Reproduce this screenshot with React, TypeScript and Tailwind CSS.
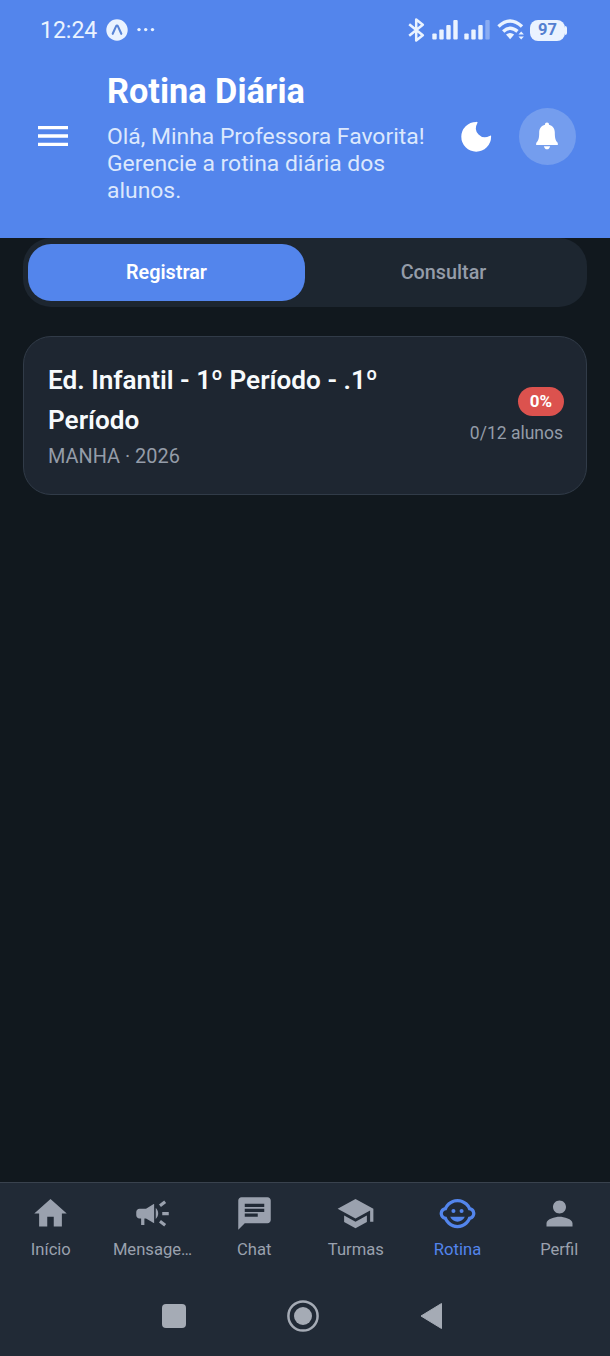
import type { ReactNode } from 'react';
import { MdChat, MdChildCare, MdHome, MdMenu, MdPerson, MdSchool } from 'react-icons/md';

function Signal({ faded = false }: { faded?: boolean }) {
  return (
    <svg width="26" height="20" viewBox="0 0 26 20" fill="#eaf3ff">
      <rect x="0.3" y="13.5" width="4.4" height="6" rx="1" />
      <rect x="7.3" y="9.5" width="4.4" height="10" rx="1" />
      <rect x="14.3" y="5" width="4.4" height="14.5" rx="1" />
      <rect x="21.3" y="0" width="4.4" height="19.5" rx="1" opacity={faded ? 0.35 : 1} />
    </svg>
  );
}

function StatusBar() {
  return (
    <div className="flex h-[60px] items-center text-[#eaf3ff]">
      <span className="ml-[40px] w-[58px] pt-px text-[23px] leading-[27px] whitespace-nowrap">12:24</span>
      <svg className="ml-[8px]" width="22" height="22" viewBox="0 0 22 22">
        <circle cx="11" cy="11" r="10.7" fill="#eaf3ff" />
        <path d="M6.7 14.8 L10 7.4 Q11 5.8 12 7.4 L15.3 14.8" fill="none" stroke="#5884d6" strokeWidth="2.1" strokeLinecap="round" />
      </svg>
      <svg className="ml-[8px]" width="20" height="6" viewBox="0 0 20 6" fill="#eaf3ff">
        <circle cx="3" cy="2.6" r="1.7" />
        <circle cx="9.7" cy="2.6" r="1.7" />
        <circle cx="16.5" cy="2.6" r="1.7" />
      </svg>
      <svg className="ml-[252px]" width="18" height="24" viewBox="0 0 18 24" fill="none" stroke="#eaf3ff" strokeWidth="2.5" strokeLinejoin="round">
        <path d="M1.2 6.2 L14.8 17.2 L8.2 22.4 V1.6 L14.8 6.8 L1.2 17.8" />
      </svg>
      <div className="ml-[6px] flex items-center gap-[6px]">
        <Signal />
        <Signal faded />
      </div>
      <svg className="ml-[7px]" width="28" height="22" viewBox="0 0 28 22" fill="none" stroke="#eaf3ff" strokeWidth="3.4">
        <path d="M1.5 7.5 Q13 -3.5 25 7.5" />
        <path d="M6.2 12.4 Q13 6 20.5 12.4" />
        <path d="M9 15.4 Q13 12.4 17.2 15.4 L13.1 20.2 Z" fill="#eaf3ff" stroke="none" />
        <path d="M21.5 15.6 L24.2 12.4 L26.9 15.6 Z M21.5 17.4 L24.2 20.6 L26.9 17.4 Z" fill="#eaf3ff" stroke="none" />
      </svg>
      <div className="ml-[5px] flex h-[21px] w-[35px] items-center justify-center rounded-[8px] bg-[#eaf3ff] text-[16.5px] leading-none font-bold text-[#5480d0]">
        97
      </div>
      <div className="h-[9px] w-[2px] rounded-r bg-[#eaf3ff]" />
    </div>
  );
}

function Header() {
  return (
    <header className="h-[238px] bg-[#5385ec]">
      <StatusBar />
      <div className="flex h-[152px] items-center">
        <MdMenu className="ml-[33px] h-[40px] w-[40px] text-white" />
        <div className="ml-[34px] w-[336px] pt-[2px]">
          <h1 className="text-[34.3px] leading-[40px] font-bold text-white">Rotina Diária</h1>
          <p className="mt-[12px] text-[22.9px] leading-[27px] text-[#dce8fd]">
            Olá, Minha Professora Favorita!
            <br />
            Gerencie a rotina diária dos
            <br />
            alunos.
          </p>
        </div>
        <svg className="ml-[18px]" width="31" height="31" viewBox="0 0 31 31" fill="#fff">
          <path d="M15.2 0.9 Q17.4 0.6 16.2 2.4 A9.1 9.1 0 0 0 28.6 14.9 Q30.4 13.7 30.1 15.8 A14.9 14.9 0 1 1 15.2 0.9 Z" />
        </svg>
        <div className="ml-[27px] flex h-[57px] w-[57px] items-center justify-center rounded-full bg-[#749dee]">
          <svg className="mr-px" width="24" height="28" viewBox="0 0 24 28" fill="#fff">
            <path d="M12 0.5 C13.3 0.5 14 1.4 14 2.7 C17.6 3.6 19.8 6.6 19.8 10.5 C19.8 16.5 20.6 18.5 22.5 20.4 Q23.6 23 22 23 H2 Q0.4 23 1.5 20.4 C3.4 18.5 4.2 16.5 4.2 10.5 C4.2 6.6 6.4 3.6 10 2.7 C10 1.4 10.7 0.5 12 0.5 Z" />
            <path d="M8.9 24.2 H15.1 Q14.4 27.3 12 27.3 Q9.6 27.3 8.9 24.2 Z" />
          </svg>
        </div>
      </div>
    </header>
  );
}

function Tabs() {
  return (
    <div className="mx-[23px] flex h-[69px] rounded-[28px] bg-[#1d2630] px-[5px] pt-[6px] pb-[6px] text-[19.8px] font-medium">
      <div className="flex flex-1 items-center justify-center rounded-[23px] bg-[#5385ec] font-semibold text-white">Registrar</div>
      <div className="flex flex-1 items-center justify-center text-[#949ca8]">Consultar</div>
    </div>
  );
}

function ClassCard() {
  return (
    <section className="mx-[23px] mt-[29px] flex h-[159px] items-center justify-between rounded-[28px] border-[1.5px] border-[#313b48] bg-[#1e2631] pr-[23px] pl-[24px]">
      <div className="w-[380px] pt-[2px]">
        <h2 className="text-[26.15px] leading-[40px] font-semibold text-[#f7fafc]">
          Ed. Infantil - 1º Período - .1º
          <br />
          Período
        </h2>
        <p className="pt-px text-[19.9px] leading-[32px] text-[#949ca8]">MANHA · 2026</p>
      </div>
      <div className="flex flex-col items-end pt-px">
        <span className="-mr-px flex h-[29px] w-[46px] items-center justify-center rounded-full bg-[#dc524e] pt-px text-[17px] font-bold text-white">0%</span>
        <span className="mt-[4px] text-[17.5px] leading-[26px] text-[#949ca8]">0/12 alunos</span>
      </div>
    </section>
  );
}

function NavItem({ icon, label, active = false }: { icon: ReactNode; label: string; active?: boolean }) {
  return (
    <div className={`flex flex-1 flex-col items-center pt-[11px] ${active ? 'text-[#5385ec]' : 'text-[#9aa1ae]'}`}>
      {icon}
      <span className="mt-[5px] text-[16.6px] leading-[24px] font-[450] whitespace-nowrap">{label}</span>
    </div>
  );
}

function BottomNav() {
  const icon = 'h-[39px] w-[39px]';
  return (
    <nav className="h-[174px] border-t border-[#39424e] bg-[#212a36]">
      <div className="flex h-[92px]">
        <NavItem icon={<MdHome className={icon} />} label="Início" />
        <NavItem
          icon={
            <svg className={icon} viewBox="0 0 24 24" fill="currentColor">
              <path d="M18 11v2h4v-2h-4zM16 17.61c.96.71 2.21 1.65 3.2 2.39.4-.53.8-1.07 1.2-1.6-.99-.74-2.24-1.68-3.2-2.4-.4.54-.8 1.08-1.2 1.61zM20.4 5.6c-.4-.53-.8-1.07-1.2-1.6-.99.74-2.24 1.68-3.2 2.4.4.53.8 1.07 1.2 1.6.96-.72 2.21-1.65 3.2-2.4zM4 9c-1.1 0-2 .9-2 2v2c0 1.1.9 2 2 2h1v4h2v-4h1l5 3V6L8 9H4zM15.5 12c0-1.33-.58-2.53-1.5-3.35v6.69c.92-.81 1.5-2.01 1.5-3.34z" />
            </svg>
          }
          label="Mensage…"
        />
        <NavItem icon={<MdChat className={icon} />} label="Chat" />
        <NavItem icon={<MdSchool className={icon} />} label="Turmas" />
        <NavItem icon={<MdChildCare className={icon} />} label="Rotina" active />
        <NavItem icon={<MdPerson className={icon} />} label="Perfil" />
      </div>
      <div className="flex h-[81px] items-center pl-[162px]">
        <div className="h-[24px] w-[24px] rounded-[4px] bg-[#a5abb5]" />
        <svg className="ml-[101px]" width="32" height="32" viewBox="0 0 32 32">
          <circle cx="16" cy="16" r="14.6" fill="none" stroke="#a5abb5" strokeWidth="2.5" />
          <circle cx="16" cy="16" r="9" fill="#a5abb5" />
        </svg>
        <svg className="ml-[101px]" width="23" height="28" viewBox="0 0 23 28" fill="#a5abb5">
          <path d="M1 14 L21.5 1.5 V26.5 Z" stroke="#a5abb5" strokeLinejoin="round" />
        </svg>
      </div>
    </nav>
  );
}

export default function App() {
  return (
    <div className="flex h-[1356px] w-[610px] flex-col overflow-hidden bg-[#11181e] font-['Roboto',sans-serif]">
      <Header />
      <main className="flex-1">
        <Tabs />
        <ClassCard />
      </main>
      <BottomNav />
    </div>
  );
}
